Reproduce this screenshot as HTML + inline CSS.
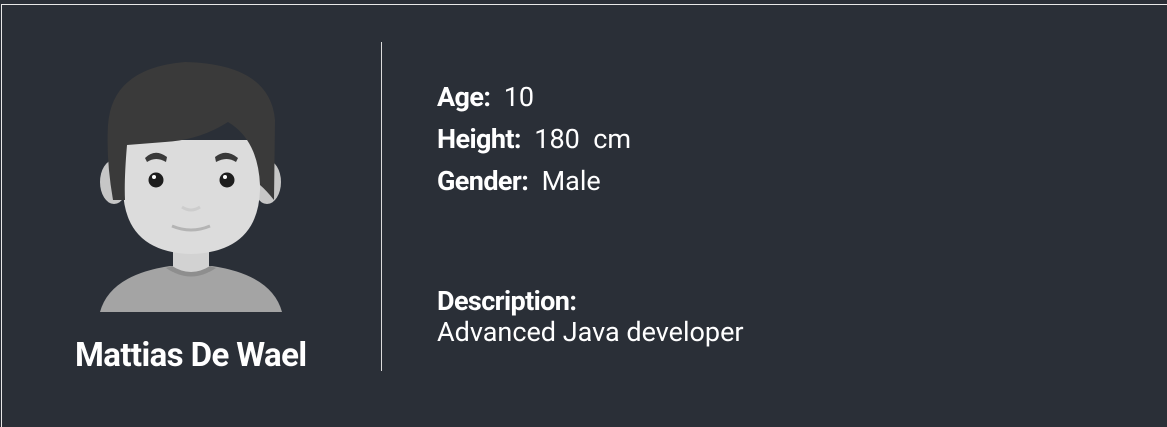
<!DOCTYPE html>
<html><head><style>
html,body{margin:0;padding:0;width:1167px;height:427px;background:#2a2f37;overflow:hidden;font-family:"Roboto","Liberation Sans",sans-serif;color:#fff}
.card{position:absolute;left:1px;top:4px;width:1166px;height:423px;border-left:1px solid #e8e8e8;border-top:1px solid #e8e8e8;box-sizing:border-box}
.t{position:absolute;font-size:27px;white-space:nowrap;line-height:30px}
b{font-weight:bold;letter-spacing:-0.6px}
</style></head><body>
<div class="card"></div>
<svg style="position:absolute;left:0;top:0" width="400" height="427">
<path d="M100 312 Q110 275 170 266 L212 266 Q272 275 282 312 Z" fill="#a4a4a4"/>
<path d="M173 250 L209 250 L209 272 Q191 280 173 272 Z" fill="#d2d2d2"/>
<path d="M172 266 Q191 278 210 266 L216 268 Q191 285 166 268 Z" fill="#8e8e8e"/>
<ellipse cx="114" cy="182" rx="14" ry="22" fill="#c6c6c6"/>
<ellipse cx="267" cy="182" rx="14" ry="22" fill="#c6c6c6"/>
<path d="M123 140 L260 140 L260 190 Q258 252 191 254 Q125 252 123 190 Z" fill="#dcdcdc"/>
<path d="M113 200 Q106 160 108 125 Q112 68 185 62 Q270 64 275 120 L274 200 Q266 190 260 185 Q258 140 228 122 Q200 140 165 142 L127 145 Q124 180 125 200 Z" fill="#3a3a3a"/>
<path d="M145 158 Q155 148 167 157 L166 162 Q156 156 147 162 Z" fill="#3a3a3a"/>
<path d="M215 157 Q226 148 238 158 L236 162 Q227 156 216 162 Z" fill="#3a3a3a"/>
<circle cx="156" cy="180" r="7.5" fill="#1e1e1e"/><circle cx="154" cy="177" r="2" fill="#fff"/>
<circle cx="227" cy="180" r="7.5" fill="#1e1e1e"/><circle cx="225" cy="177" r="2" fill="#fff"/>
<path d="M172 226 Q191 234 210 226" stroke="#b4b4b4" stroke-width="3" fill="none"/>
<path d="M182 207 Q191 213 200 207" stroke="#cdcdcd" stroke-width="3" fill="none"/>
<rect x="381" y="42" width="1" height="329" fill="#dcdcdc"/>
</svg>
<div class="t" style="left:75px;top:338px;font-size:33px;line-height:36px;font-weight:bold;letter-spacing:-0.6px">Mattias De Wael</div>
<div class="t" style="left:437px;top:82px"><b>Age:</b>&nbsp; 10</div>
<div class="t" style="left:437px;top:124px"><b>Height:</b>&nbsp; 180&nbsp; cm</div>
<div class="t" style="left:437px;top:166px"><b>Gender:</b>&nbsp; Male</div>
<div class="t" style="left:437px;top:286px"><b>Description:</b></div>
<div class="t" style="left:437px;top:317px">Advanced Java developer</div>
</body></html>
